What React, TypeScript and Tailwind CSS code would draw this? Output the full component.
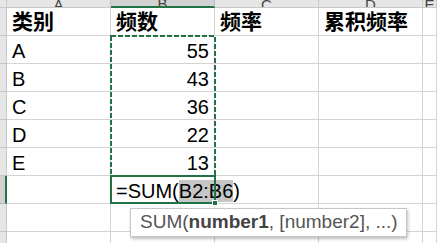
import React from "react";

const GREEN = "#217346";
const GRID = "border-[#d4d4d4]";

// column widths in px: row header, A, B, C, D, E
const colWidths = ["w-[7px]", "w-[104px]", "w-[104px]", "w-[104px]", "w-[104px]", "flex-1"];

const headerRow = ["类别", "频数", "频率", "累积频率"];
const data: [string, number][] = [
  ["A", 55],
  ["B", 43],
  ["C", 36],
  ["D", 22],
  ["E", 13],
];

const font = { fontFamily: '"Liberation Sans", "Noto Sans CJK SC", sans-serif' };

function ColumnHeaders() {
  const letters = ["", "A", "B", "C", "D", "E"];
  return (
    <div className="flex h-[8px]">
      {letters.map((l, i) => (
        <div
          key={i}
          className={`${colWidths[i]} h-[8px] overflow-hidden flex justify-center items-end border-r border-b ${
            i === 2 ? "bg-[#d2d2d2] border-b-2 border-b-[#217346] border-r-[#b8b8b8]" : "bg-[#e6e6e6] border-[#c8c8c8]"
          }`}
        >
          <span className="text-[15px] leading-none text-[#444] mb-[-5px]">{l}</span>
        </div>
      ))}
    </div>
  );
}

function Row({
  cells,
  selected,
  bold,
}: {
  cells: React.ReactNode[];
  selected?: boolean;
  bold?: boolean;
}) {
  return (
    <div className="flex h-[28px]">
      <div
        className={`w-[7px] h-[28px] border-b ${
          selected ? "bg-[#d2d2d2] border-r-2 border-r-[#217346] border-b-[#b8b8b8]" : "bg-[#e6e6e6] border-r border-[#c8c8c8]"
        }`}
      />
      {[0, 1, 2, 3, 4].map((c) => (
        <div
          key={c}
          className={`${colWidths[c + 1]} h-[28px] border-r border-b ${GRID} flex items-end px-[5px] whitespace-nowrap ${
            c === 1 && !bold && !selected ? "justify-end" : "justify-start"
          } ${bold ? "font-bold text-[21px] pb-[1px]" : "pb-[0px]"} ${c === 1 && selected ? "relative z-10 overflow-visible" : "overflow-hidden"}`}
        >
          <span className="leading-[24px]">{cells[c]}</span>
        </div>
      ))}
    </div>
  );
}

export default function App() {
  return (
    <div className="relative w-[437px] h-[243px] overflow-hidden bg-white text-[20px] text-black" style={font}>
      <ColumnHeaders />
      <Row cells={headerRow} bold />
      {data.map(([k, v]) => (
        <Row key={k} cells={[k, v]} />
      ))}
      <Row
        selected
        cells={[
          "",
          <>
            =SUM(<span className="bg-[#c6c6c6]">B2:B6</span>)
          </>,
        ]}
      />
      <Row cells={[]} />
      <Row cells={[]} />

      {/* copy marquee around B2:B6 */}
      <svg className="absolute left-[110px] top-[35px] z-20" width="106" height="142">
        <rect x="1" y="1" width="104" height="140" fill="none" stroke={GREEN} strokeWidth="2" strokeDasharray="5 2" />
      </svg>

      {/* active cell */}
      <div className="absolute left-[110px] top-[175px] w-[106px] h-[29px] border-2 border-[#217346] z-20" />
      <div className="absolute left-[212px] top-[200px] w-[6px] h-[6px] bg-[#217346] border border-white z-30" />

      {/* function tooltip */}
      <div className="absolute left-[130px] top-[208px] w-[277px] h-[29px] bg-white border border-[#c6c6c6] shadow-[1px_2px_3px_rgba(0,0,0,0.25)] z-30 flex items-center pl-[9px] text-[19px] text-[#555] whitespace-nowrap">
        SUM(<span className="font-bold text-[#444]">number1</span>, [number2], ...)
      </div>
    </div>
  );
}
